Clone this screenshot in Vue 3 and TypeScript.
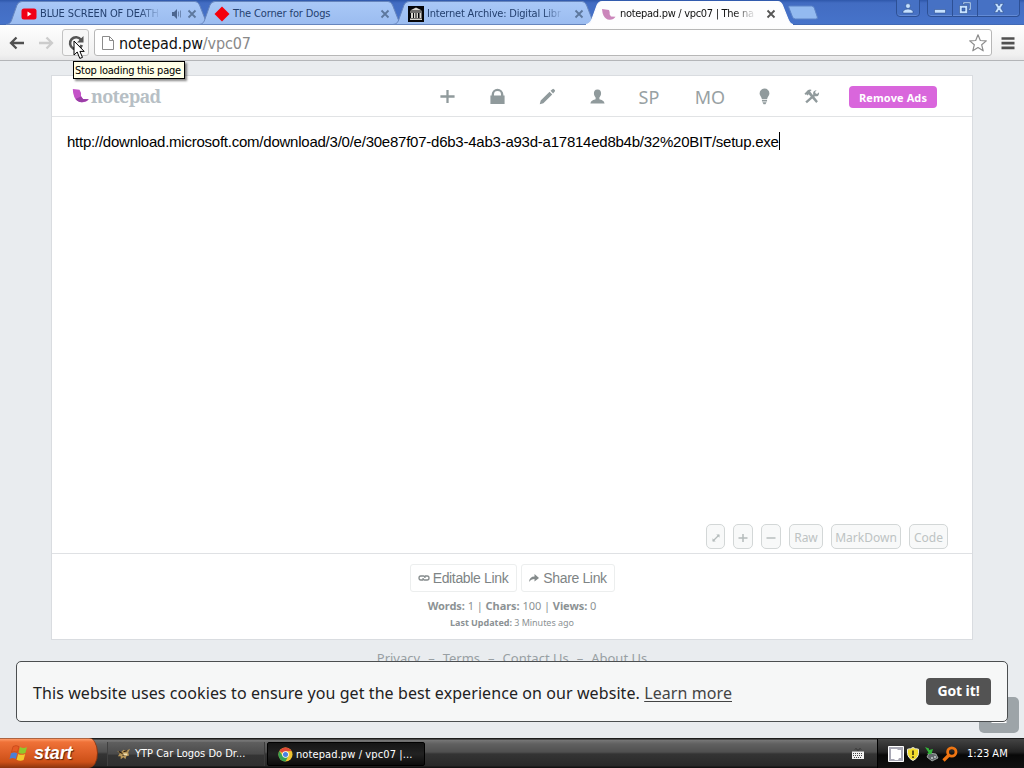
<script setup lang="ts">
interface Tab { title: string; icon: 'youtube' | 'diamond' | 'archive' | 'notepad'; audio?: boolean; active?: boolean; cls: string }
const tabs: Tab[] = [
  { title: 'BLUE SCREEN OF DEATH', icon: 'youtube', audio: true, cls: 't1' },
  { title: 'The Corner for Dogs', icon: 'diamond', cls: 't2' },
  { title: 'Internet Archive: Digital Libr', icon: 'archive', cls: 't3' },
  { title: 'notepad.pw / vpc07 | The na', icon: 'notepad', active: true, cls: 't4' },
]
const links: string[] = ['Privacy', 'Terms', 'Contact Us', 'About Us']
</script>

<template>
  <div class="screen">
    <header class="tabstrip">
      <div v-for="t in tabs" :key="t.cls" class="tab" :class="[t.cls, { active: t.active }]">
        <svg class="shape" viewBox="0 0 204 25" preserveAspectRatio="none">
          <defs>
            <linearGradient id="tabfill" x1="0" y1="0" x2="0" y2="1">
              <stop offset="0" stop-color="#a9c8f7" /><stop offset="1" stop-color="#9bbcf0" />
            </linearGradient>
          </defs>
          <path d="M0 24.5 C4 24 5 22 6 19 L11 5 Q12.500 1.500 16 1.500 H189 Q192 1.500 193.500 5 L199 19 Q201 24 204 24.500 Z"
            :fill="t.active ? '#fdfdfe' : 'url(#tabfill)'" :stroke="t.active ? '#fdfdfe' : '#6685bd'" stroke-width="1" />
        </svg>
        <svg v-if="t.icon === 'youtube'" class="fav" viewBox="0 0 16 16"><rect x="0.500" y="2.500" width="15" height="11" rx="2.500" fill="#f00016" /><path d="M6.500 5.500v5l4-2.500z" fill="#fff" /></svg>
        <svg v-else-if="t.icon === 'diamond'" class="fav" viewBox="0 0 16 16"><path d="M8 .5 15.500 8 8 15.500.5 8z" fill="#f5000c" /></svg>
        <svg v-else-if="t.icon === 'archive'" class="fav" viewBox="0 0 16 16"><rect width="16" height="16" fill="#050508" /><path d="M8 1.500 14 4.500H2zM2 5.500h12v1H2zM3 7h2v5H3zM6 7h1.500v5H6zM8.500 7H10v5H8.500zM11.500 7h2v5h-2zM2 12.500h12V14H2z" fill="#d9d6cf" /></svg>
        <svg v-else class="fav" viewBox="0 0 16 16"><path d="M1 3 L8 4 Q9 6 8.700 8.500 L10 10.500 L14.500 10.800 Q12.500 14 8.500 13.800 Q4.500 13.500 2.500 9.500 Q1.300 7 1 3z" fill="#cb86bb" /></svg>
        <span class="title">{{ t.title }}</span>
        <svg v-if="t.audio" class="audio" viewBox="0 0 12 12"><path d="M1 4h2l3-3v10L3 8H1z" fill="#4c6690" /><path d="M7.500 3.500v5M9.500 2.500v7" stroke="#6d88b3" fill="none" /></svg>
        <svg class="close" viewBox="0 0 10 10"><path d="M1.500 1.500l7 7M8.500 1.500l-7 7" /></svg>
      </div>
      <svg class="newtab" viewBox="0 0 32 16"><path d="M2.500 1h22q2 0 2.800 2l3 9q.7 2-1.500 2H8.500q-2.200 0-3-2L2 3Q1 1 2.500 1z" fill="#93baf0" stroke="#5b82c6" /></svg>
      <div class="wincontrols">
        <span class="wc person"><svg viewBox="0 0 12 12"><circle cx="6" cy="4" r="2.400" /><path d="M1 11V9Q3 7 6 7T11 9v2z" /></svg></span>
        <span class="wc min"><svg viewBox="0 0 12 12"><path d="M.5 7.500h11v3.500H.5z" /></svg></span>
        <span class="wc max"><svg viewBox="0 0 12 12"><path fill-rule="evenodd" d="M0.500 3.500h8v8h-8zm2.500 2.500v3h3V6zM4 0h8v8H9.500V6.500h1v-5h-5v1H4z" /></svg></span>
        <span class="wc cls"><svg viewBox="0 0 12 12"><path d="M1.500 1.500h3L6 4l1.500-2.500h3L7.800 6l2.700 4.500h-3L6 8l-1.500 2.500h-3L4.200 6z" /></svg></span>
      </div>
    </header>

    <div class="toolbar">
      <svg class="nav back" viewBox="0 0 18 16"><path d="M8.500 2.500 3 8l5.500 5.500M3 8h13" stroke="#505050" stroke-width="2.300" fill="none" /></svg>
      <svg class="nav fwd" viewBox="0 0 18 16"><path d="M9.500 2.500 15 8l-5.500 5.500M15 8H2" stroke="#cccccc" stroke-width="2.300" fill="none" /></svg>
      <div class="reload"><svg viewBox="0 0 18 18"><path d="M14 5.800A6 6 0 1 0 14.800 11" stroke="#555" stroke-width="2.600" fill="none" /><path d="M16.500 2v6.500H10z" fill="#555" /></svg></div>
      <div class="omnibox">
        <svg class="doc" viewBox="0 0 14 16"><path d="M1.500 1.500h7l4 4v9h-11zM8.500 1.500v4h4" fill="#fff" stroke="#8b8b8b" /></svg>
        <span class="url">notepad.pw<i>/vpc07</i></span>
        <svg class="star" viewBox="0 0 20 20"><path d="M10 1.800l2.300 5.700 6 .4-4.600 3.900 1.500 6L10 14.500l-5.200 3.300 1.500-6L1.700 7.900l6-.4z" fill="#fff" stroke="#8d8d8d" stroke-width="1.200" stroke-linejoin="round" /></svg>
      </div>
      <svg class="menu" viewBox="0 0 14 14"><path d="M.5 2.500h13M.5 7.200h13M.5 11.900h13" stroke="#505050" stroke-width="2.700" /></svg>
      <svg class="cursor" viewBox="0 0 14 21"><path d="M1 1v14l3.200-3 2.600 6.400 2.700-1-2.600-6h4.300z" fill="#fff" stroke="#000" stroke-width="1" /></svg>
      <div class="tip">Stop loading this page</div>
    </div>

    <main class="page">
      <section class="card">
        <div class="head">
          <div class="logo">
            <svg viewBox="0 0 18 15"><path d="M.8 1 L7.500 1.800 Q9.500 4.500 9 8 L11 11 L16.800 11.300 Q14.500 14.300 10 14.200 Q4.500 14 2.300 9 Q.8 5.500 .8 1z" fill="#c452c8" /><path d="M3.500 11 L9 8.500 L11 11 L16.800 11.300 Q14 14.400 9.500 14.200 Q5.500 14 3.500 11z" fill="#9a3fa6" /></svg>
            <span>notepad</span>
          </div>
          <nav class="tools">
            <span><svg viewBox="0 0 18 18"><path d="M9 2v14M1.500 9h15" stroke="#909a9c" stroke-width="2.400" /></svg></span>
            <span><svg viewBox="0 0 18 18"><path d="M1.500 8h1.300V7a6.200 6.200 0 0 1 12.400 0v1h1.300v9h-15zM5.300 8h7.400V7a3.700 3.700 0 0 0-7.400 0z" fill="#909a9c" /></svg></span>
            <span><svg viewBox="0 0 18 18"><path d="M.8 17.200l1-4L11.200 4l2.800 2.800-9.400 9.400zM12.200 3l2-1.800q.8-.6 1.600.1l.9.900q.7.800 0 1.600l-1.800 2z" fill="#909a9c" /></svg></span>
            <span><svg viewBox="0 0 18 18"><path d="M9 1.500c3 0 3.800 2 3.800 4 0 2.200-1 3.500-1.800 4.500v2c2 .8 5 1 5.500 4.500h-15c.5-3.500 3.500-3.700 5.500-4.500v-2C6.200 9 5.200 7.700 5.200 5.500c0-2 .8-4 3.800-4z" fill="#909a9c" /></svg></span>
            <span class="txt">SP</span>
            <span class="txt mo">MO</span>
            <span><svg viewBox="0 0 18 18"><path d="M9 .5a5.200 5.200 0 0 1 5.200 5.200c0 2.500-2.200 3.500-2.500 6.300H6.300C6 9.200 3.800 8.200 3.800 5.700A5.200 5.200 0 0 1 9 .5zM6.300 12.800h5.400v1.500H6.300zM6.800 15.200h4.400L10 17.200H8z" fill="#909a9c" /></svg></span>
            <span><svg viewBox="0 0 18 18"><path d="M1.500 6 5 2.500q2-1.300 4.200-.5L7.500 3.700 15.800 14 14 16 6 6.500 4.800 8 3.500 6.700 3 7.500z" fill="#909a9c" /><path d="M3.300 15.200 12 7.500" stroke="#909a9c" stroke-width="2.500" /><path d="M14.500 2.500 12.700 4.300l1 1.700 1.500.2L17 4.500q.3 3.800-2.500 4.300-3.500.2-3.800-3 0-3 3.800-3.300z" fill="#909a9c" /></svg></span>
          </nav>
          <button class="remove">Remove Ads</button>
        </div>
        <div class="editor">
          <p class="text">http://download.microsoft.com/download/3/0/e/30e87f07-d6b3-4ab3-a93d-a17814ed8b4b/32%20BIT/setup.exe</p>
          <div class="modes">
            <span class="m1"><svg viewBox="0 0 12 12"><path d="M3 9l6-6" stroke="#b4bbbb" stroke-width="1.300" /><path d="M6.300 2.500h3.200v3.200zM2.500 6.300v3.200h3.200z" fill="#b4bbbb" /></svg></span>
            <span class="m2"><svg viewBox="0 0 12 12"><path d="M6 2v8M1.500 6h9" stroke="#b4bbbb" stroke-width="1.500" /></svg></span>
            <span class="m3"><svg viewBox="0 0 12 12"><path d="M1.500 6h9" stroke="#b4bbbb" stroke-width="1.400" /></svg></span>
            <span class="m4">Raw</span><span class="m5">MarkDown</span><span class="m6">Code</span>
          </div>
        </div>
        <div class="foot">
          <div class="share">
            <span class="b1"><svg viewBox="0 0 12 10"><path d="M5 7H2.800Q1 7 1 5T2.800 3H5.500Q7 3 7 5M7 3h2.200Q11 3 11 5T9.200 7H6.500Q5 7 5 5" stroke="#858b8c" stroke-width="1.300" fill="none" /></svg>Editable Link</span>
            <span class="b2"><svg viewBox="0 0 12 10"><path d="M1 9Q1.500 3.500 6.500 3.500V1L11 5 6.500 8.500V6Q3 6 1 9z" fill="#858b8c" /></svg>Share Link</span>
          </div>
          <p class="stats"><b>Words:</b> 1 | <b>Chars:</b> 100 | <b>Views:</b> 0</p>
          <p class="updated"><b>Last Updated:</b> <i>3 Minutes ago</i></p>
        </div>
      </section>
      <div class="links">
        <template v-for="(l, i) in links" :key="l"><em v-if="i">–</em><span>{{ l }}</span></template>
      </div>
      <div class="chat"><svg viewBox="0 0 16 16"><path d="M1.500 8v6h13V8" stroke="#fff" stroke-width="2" fill="none" /></svg></div>
      <aside class="cookie">
        <p>This website uses cookies to ensure you get the best experience on our website. <u>Learn more</u></p>
        <button>Got it!</button>
      </aside>
    </main>

    <footer class="taskbar">
      <div class="start">
        <svg viewBox="0 0 20 18"><path d="M4 2.500q3-1.800 6 0L8.500 8.300q-3-1.500-6 0z" fill="#e55b24" stroke="#b23c12" stroke-width=".5" /><path d="M11 3q3.500 1.800 7 0l-1.600 6q-3.500 1.500-6.800-.2z" fill="#8fc92c" /><path d="M2 9.300q3-1.500 6.200 0L6.700 15q-3-1.800-6.200 0z" fill="#4c7fd5" /><path d="M9.200 10q3.400 1.700 7 0l-1.600 6q-3.500 1.600-7-.3z" fill="#f2c82d" /></svg>
        <span>start</span>
      </div>
      <div class="task k1">
        <svg viewBox="0 0 16 16"><path d="M1 5l4 2 3-3 3 1 4-2-2 4 1 3-3 1-1 3-2-2-3 2 0-3-3 0 2-3z" fill="#b99758" /><path d="M3 6l4 2M8 6l4-1M7 10l4-1" stroke="#2b1d10" stroke-width="1.200" /><path d="M8 8h4v2H8z" fill="#f0dfb0" /></svg>
        <span>YTP Car Logos Do Dr...</span>
      </div>
      <div class="task k2">
        <svg viewBox="0 0 16 16"><circle cx="8" cy="8" r="7.500" fill="#f0c330" /><path d="M8 8 1.500 4.250A7.500 7.500 0 0 1 14.500 4.250L8 4.500z" fill="#df4937" /><path d="M1.500 4.250A7.500 7.500 0 0 0 8 15.500L11 9.700 5 9.700z" fill="#36a153" /><circle cx="8" cy="8" r="3.500" fill="#fff" /><circle cx="8" cy="8" r="2.700" fill="#4a80e0" /></svg>
        <span>notepad.pw / vpc07 |...</span>
      </div>
      <svg class="kbd" viewBox="0 0 12 12"><path d="M3 2.500q1-2 2 0t2 0 2 0" stroke="#222" fill="none" stroke-width=".8" /><path d="M0 4.500h12V12H0z" fill="#f3f3f3" /><path d="M1 6.500h10M1 8.500h10M2 10.500h8" stroke="#333" stroke-width=".9" stroke-dasharray="1 1" /></svg>
      <div class="tray">
        <svg viewBox="0 0 16 16"><path d="M.5.500h15v15H.5z" fill="#a8a8b4" stroke="#fff" /><path d="M3 3h6l1 1h3v8h-2l-1 2H7l-1-1H3z" fill="#fff" /></svg>
        <svg class="shield" viewBox="0 0 14 16"><path d="M7 1.500Q9 3 12.500 3.200v4.500q-.7 4.500-5.500 6.800Q2.200 12.200 1.500 7.700V3.200Q5 3 7 1.500z" fill="#f4dd2c" stroke="#e9e9db" /><path d="M7 4.500v4.500M7 10.300v1.700" stroke="#463c10" stroke-width="1.700" /></svg>
        <svg class="usb" viewBox="0 0 16 16"><path d="M6 7l7 1 2 4-6 3-5-4z" fill="#61686b" stroke="#c3cac6" stroke-width=".7" /><path d="M2 1l4 1.500 0 1.500 4-1-1.500 5L4 8l1.500-1.500z" fill="#35b53b" /><path d="M8 12h2M11 11h2" stroke="#fff" /></svg>
        <svg class="mag" viewBox="0 0 16 16"><circle cx="9.800" cy="6" r="4.200" stroke="#ef7512" stroke-width="2.800" fill="none" /><path d="M7 9 1.500 14.500" stroke="#ef7512" stroke-width="3.200" /></svg>
        <time>1:23 AM</time>
      </div>
    </footer>
  </div>
</template>

<style>
html, body { margin: 0; overflow: hidden; }
</style>

<style scoped>
* { box-sizing: border-box; }
p { margin: 0; }
svg { display: block; flex: none; }
i, em { font-style: normal; }
button { border: 0; padding: 0; }
.screen { width: 1024px; height: 768px; display: grid; grid-template-rows: 25px 36px 677px 30px; overflow: hidden; font-family: "DejaVu Sans Condensed", "DejaVu Sans", sans-serif; font-size: 11px; white-space: nowrap; }

.tabstrip { display: flex; padding-left: 6px; background: linear-gradient(#2e57aa 0, #426cc2 3px, #4673ca 24px, #3d5f9f); }
.tab { position: relative; width: 204px; height: 25px; margin-right: -10px; display: flex; align-items: center; padding: 2px 13px 0 15px; color: #24406f; }
.t1 { margin-right: -11px; }
.t3 { margin-right: -11px; }
.t4 { width: 207px; z-index: 2; color: #111; padding-right: 17px; }
.shape { position: absolute; left: 0; top: 0; width: 100%; height: 25px; }
.fav { position: relative; width: 16px; height: 16px; margin-right: 3px; }
.title { position: relative; flex: 1; min-width: 0; line-height: 16px; mask-image: linear-gradient(90deg, #000 calc(100% - 22px), transparent); margin-right: 10px; letter-spacing: -.13px; }
.t2 .title { mask-image: none; }
.t3 .title { letter-spacing: -.2px; }
.t4 .title { letter-spacing: -.3px; }
.audio { position: relative; width: 12px; height: 12px; margin-right: 4px; }
.close { position: relative; width: 10px; height: 10px; stroke: #5d789e; stroke-width: 1.800; }
.active .close { stroke: #555; }
.newtab { width: 32px; height: 16px; margin: 5px 0 0 4px; }
.wincontrols { display: flex; margin-left: auto; margin-right: 4px; }
.wc { height: 18px; margin-top: -1px; border: 1px solid #2d5095; border-left-width: 0; display: flex; justify-content: center; align-items: center; background: #4671c4; box-shadow: inset 0 -1px #638bd5; }
.wc svg { width: 12px; height: 12px; fill: #c5e1ff; stroke: #244682; stroke-width: .5; }
.person { width: 24px; border-left-width: 1px; border-radius: 0 0 4px 4px; margin-right: 7px; }
.min { width: 26px; border-left-width: 1px; border-radius: 0 0 0 4px; }
.max { width: 25px; }
.cls { width: 42px; border-radius: 0 0 4px 0; }

.toolbar { position: relative; display: flex; align-items: flex-start; background: linear-gradient(#fefefe, #f0f0f0 85%, #e7e7e8); border-bottom: 1px solid #b3b5b8; z-index: 5; }
.nav { width: 18px; height: 16px; margin-top: 10px; }
.back { margin-left: 8px; }
.fwd { margin-left: 11px; }
.reload { width: 27px; height: 27px; margin: 4px 5px 0 7px; border: 1px solid #c2c2c2; border-radius: 3px; background: #f7f7f7; display: grid; place-items: center; }
.reload svg { width: 18px; height: 18px; }
.omnibox { width: 898px; height: 27px; margin-top: 4px; border: 1px solid #b7b7b7; border-radius: 3px; background: #fff; display: flex; align-items: center; padding: 0 3px 0 6px; }
.doc { width: 14px; height: 16px; margin-right: 4px; }
.url { flex: 1; font: 16px/24px "DejaVu Sans Condensed", sans-serif; color: #111; letter-spacing: -.12px; padding-top: 2px; }
.url i { color: #898989; }
.star { width: 20px; height: 20px; }
.menu { width: 14px; height: 14px; margin: 11px 0 0 9px; }
.cursor { position: absolute; left: 73px; top: 15px; width: 14px; height: 21px; z-index: 3; }
.tip { position: absolute; left: 73px; top: 36px; width: 112px; height: 18px; border: 1px solid #000; background: #ffffe8; color: #000; line-height: 17px; padding-left: 1px; box-shadow: 2px 2px 2px #0007; letter-spacing: -.24px; }

.page { position: relative; background: #e9ecef; padding: 14px 51px 0; font-family: "Noto Sans", sans-serif; overflow: hidden; }
.card { width: 922px; height: 565px; border: 1px solid #d9dce0; background: #fff; display: grid; grid-template-rows: 41px 437px 1fr; }
.head { border-bottom: 1px solid #e1e3e5; display: flex; align-items: center; padding-top: 1px; }
.logo { width: 370px; padding-left: 20px; display: flex; align-items: center; }
.logo svg { width: 18px; height: 15px; margin-bottom: 2px; }
.logo span { font: bold 18px/26px "Noto Serif", "Liberation Serif", serif; color: #b7bfc5; letter-spacing: -.75px; margin: -1px 0 0 1px; }
.tools { display: grid; grid-template-columns: 50px 50px 50px 50px 54px 68px 40px 54px; place-items: center; }
.tools svg { width: 17px; height: 17px; }
.txt { font-size: 18px; color: #98a1a3; line-height: 24px; }
.remove { margin-left: 11px; width: 88px; height: 22px; border-radius: 4px; background: #d966dc; color: #fff; font: bold 11px/23px "Open Sans", sans-serif; letter-spacing: .1px; }
.editor { border-bottom: 1px solid #dfe1e4; display: flex; flex-direction: column; justify-content: space-between; padding: 15px 24px 4px 15px; }
.text { font: 15px/19px "Liberation Sans", Arial, sans-serif; color: #000; align-self: flex-start; border-right: 1px solid #000; height: 18px; letter-spacing: -.238px; }
.modes { display: flex; justify-content: flex-end; gap: 8px; color: #bdc3c3; font-size: 12px; }
.modes span { height: 25px; border: 1px solid #d3d7d7; border-radius: 5px; background: #f8f9f9; display: grid; place-items: center; padding-top: 2px; }
.modes svg { width: 12px; height: 12px; }
.m1 { width: 19px; } .m2, .m3 { width: 20px; }
.m4 { width: 34px; } .m5 { width: 70px; } .m6 { width: 39px; }
.foot { display: flex; flex-direction: column; align-items: center; padding-top: 10px; color: #8c9294; }
.share { display: flex; gap: 4px; }
.share span { height: 28px; border: 1px solid #eceeee; border-radius: 3px; display: flex; align-items: center; justify-content: center; gap: 3px; font: 14px/28px "Liberation Sans", Arial, sans-serif; color: #7e8485; letter-spacing: -.35px; }
.share .b2 { letter-spacing: -.35px; }
.share svg { width: 12px; height: 10px; }
.b1 { width: 107px; } .b2 { width: 94px; }
.stats { font-size: 11px; line-height: 16px; margin-top: 6px; letter-spacing: -.05px; }
.updated { font-size: 9px; line-height: 12px; margin-top: 3px; letter-spacing: -.03px; }
.links { display: flex; justify-content: center; gap: 8px; margin-top: 8px; font-size: 13px; line-height: 20px; color: #989fa3; }
.chat { position: absolute; left: 979px; top: 636px; width: 40px; height: 36px; border-radius: 5px; background: #9da4a8; display: grid; place-items: center; padding-top: 1px; }
.chat svg { width: 16px; height: 16px; }
.cookie { position: absolute; left: 16px; top: 600px; width: 992px; height: 61px; border: 1px solid #4b4e50; border-radius: 5px; background: #f6f7f7; display: flex; justify-content: space-between; align-items: center; padding: 0 16px; color: #222; font-size: 16px; }
.cookie p { padding-top: 2px; letter-spacing: .083px; }
.cookie u { color: #444; text-underline-offset: 2px; }
.cookie button { width: 65px; height: 27px; margin-bottom: 1px; border-radius: 4px; background: #535353; color: #fff; font: bold 14px/26px "Open Sans", sans-serif; letter-spacing: -.1px; padding-bottom: 1px; }

.taskbar { display: flex; background: linear-gradient(#1c1c1c 0, #1c1c1c 1px, #777 2px, #606060 6px, #505050 14px, #343434 16px, #292929 28px, #131313 29px); align-items: center; color: #fff; }
.start { width: 98px; height: 30px; border-radius: 0 9px 9px 0 / 0 15px 15px 0; background: linear-gradient(#5a2c18 0, #ff9b68 1px, #ef7238 4px, #df6028 14px, #cc5017 24px, #8b340e 30px); display: flex; align-items: center; padding-left: 9px; border-right: 1px solid #8a3510; }
.start svg { width: 20px; height: 18px; }
.start span { font: italic bold 18px/24px "Liberation Sans", sans-serif; margin-left: 5px; text-shadow: 1px 1px 1px #5a240b; letter-spacing: -.1px; }
.task { height: 24px; display: flex; align-items: center; gap: 4px; margin-top: 1px; }
.task svg { width: 15px; height: 15px; }
.k1 { width: 158px; margin-left: 9px; padding-left: 8px; border-left: 1px solid #404040; border-right: 1px solid #3b3b3b; background: linear-gradient(#5f5f5f, #4a4a4a 50%, #343434 55%, #303030); }
.k2 { width: 158px; margin-left: 2px; padding-left: 10px; border: 1px solid #000; border-radius: 2px; background: linear-gradient(#151515, #222 50%, #0c0c0c); gap: 3px; padding-top: 1px; letter-spacing: .1px; }
.kbd { width: 12px; height: 12px; margin-left: auto; margin-right: 13px; }
.tray { width: 147px; height: 29px; margin-top: 1px; background: linear-gradient(#444, #222 45%, #080808 55%, #111); border-left: 1px solid #000; display: flex; align-items: center; padding-left: 10px; }
.tray svg { width: 16px; height: 16px; }
.tray .shield { width: 14px; margin-left: 2px; }
.tray .usb { margin-left: 3px; }
.tray .mag { margin-left: 3px; }
.tray time { margin-left: 9px; }
</style>
